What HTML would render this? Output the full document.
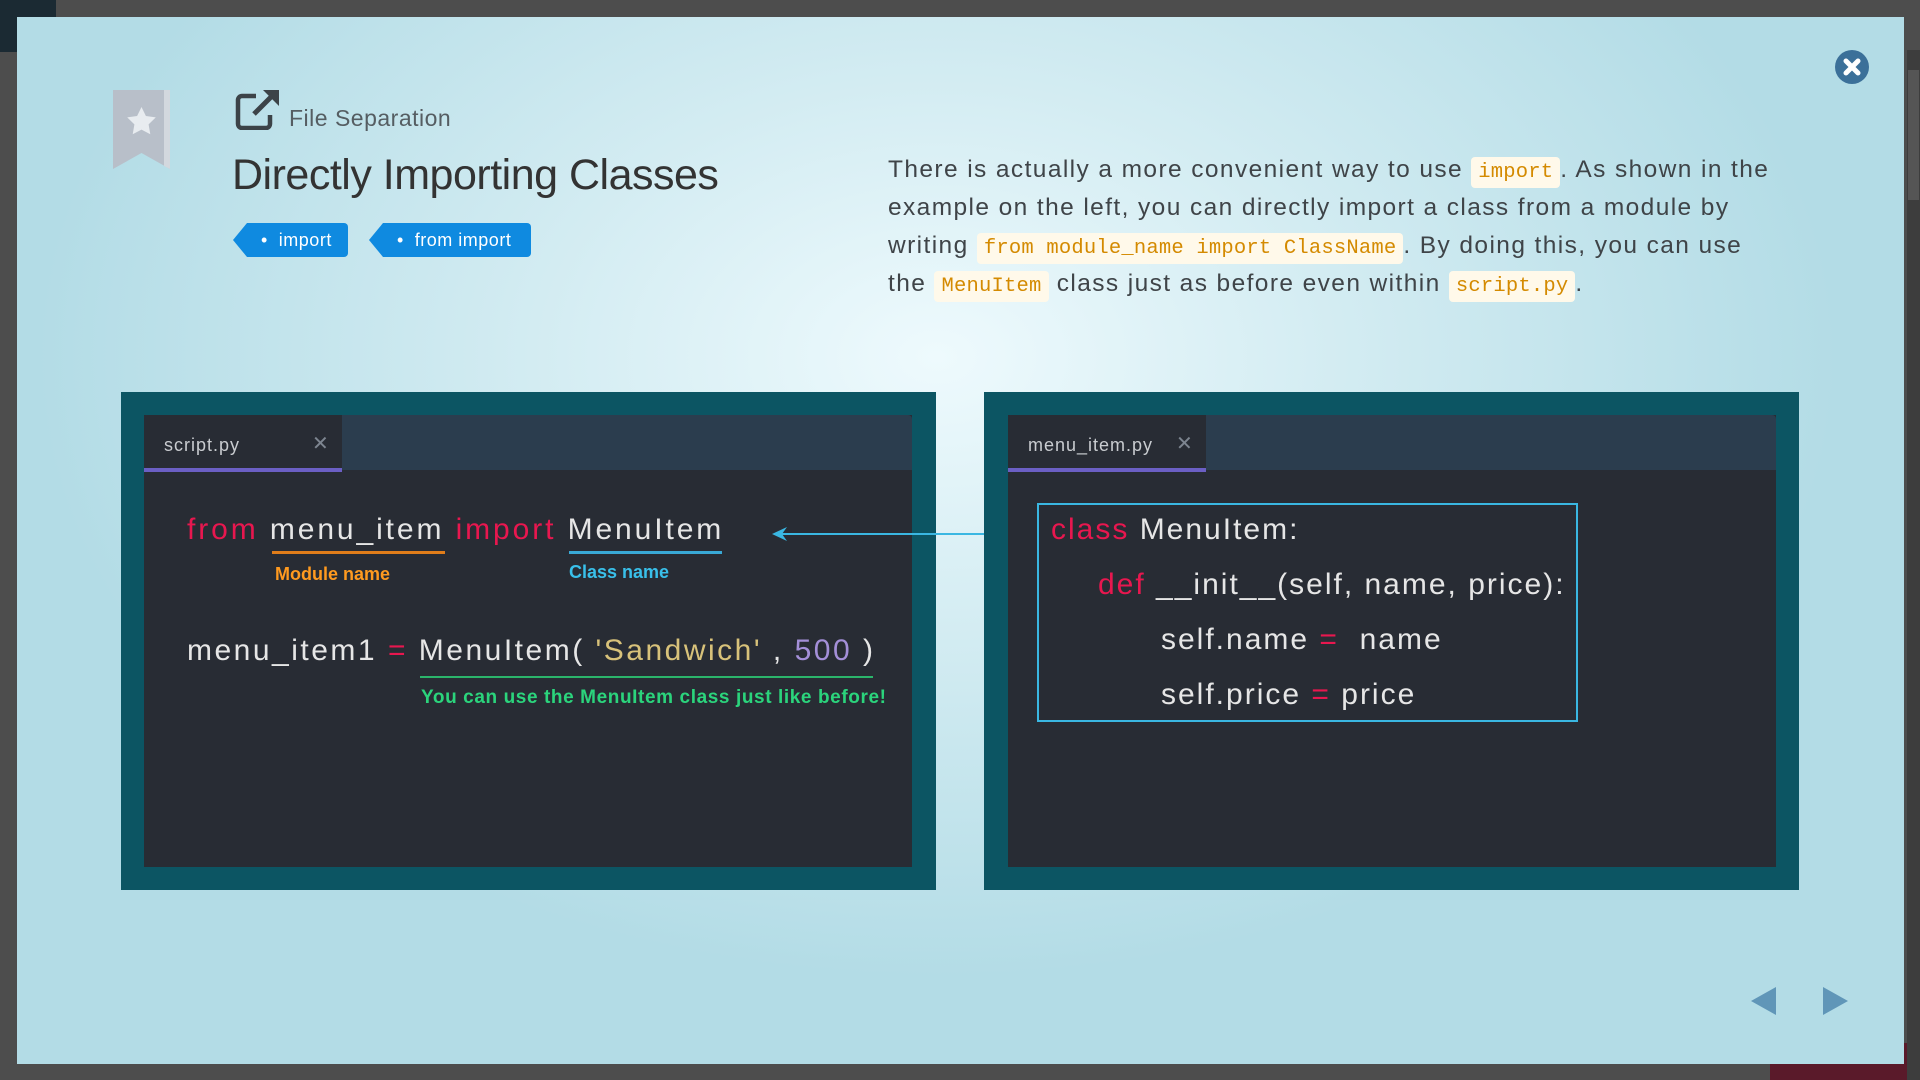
<!DOCTYPE html>
<html><head><meta charset="utf-8"><style>
*{margin:0;padding:0;box-sizing:border-box}
body{width:1920px;height:1080px;overflow:hidden;background:#4d4d4d;font-family:"Liberation Sans",sans-serif;position:relative}
.abs{position:absolute}
#modal{left:17px;top:17px;width:1887px;height:1047px;background:radial-gradient(ellipse 900px 620px at 920px 340px,#eefafd 0%,#d3ecf2 45%,#b3dce6 100%);overflow:hidden}
.code{font-family:"Liberation Sans",sans-serif;font-size:30px;color:#e6e6e6;letter-spacing:2px;white-space:pre}
.l{letter-spacing:2.9px}
.kw{color:#e8174f}
.inl{font-family:"Liberation Mono",monospace;font-size:20.5px;line-height:1;color:#d48a00;background:#fff9ea;border-radius:4px;padding:4px 7px;letter-spacing:.2px}
.tag{height:34px;background:#0f8ae0;color:#fff;font-size:18px;border-radius:0 4px 4px 0;line-height:34px;letter-spacing:.5px}
.tag:before{content:"";position:absolute;left:-14px;top:0;border-right:14px solid #0f8ae0;border-top:17px solid transparent;border-bottom:17px solid transparent}
.panel{background:#0c5563}
.ed{background:#282c34}
.tabbar{background:#2b3d4e}
.tab{background:#282c34;border-bottom:4px solid #6b5fc4;color:#c9ccd0;font-size:18px;letter-spacing:1px}
</style></head><body>
<div class="abs" style="left:0;top:0;width:56px;height:52px;background:#1b2a33"></div>
<div class="abs" style="left:1770px;top:1043px;width:137px;height:37px;background:#5a1a2a"></div>
<div class="abs" style="left:1907px;top:50px;width:13px;height:1030px;background:#3d3d3d"></div>
<div class="abs" style="left:1908px;top:70px;width:11px;height:130px;background:#555"></div>
<div id="modal" class="abs">
 <svg class="abs" style="left:95px;top:72px" width="60" height="82" viewBox="0 0 60 82">
  <path d="M1 1H58V80L29.5 64L1 80Z" fill="#b8bfc9"/>
  <path d="M52 1H58V80L52 77Z" fill="#d3d8de"/>
  <path d="M29.5 18l4.4 9 9.9 1.4-7.2 7 1.7 9.8-8.8-4.6-8.8 4.6 1.7-9.8-7.2-7 9.9-1.4z" fill="#e8ecf0"/>
 </svg>
 <svg class="abs" style="left:217px;top:71px" width="48" height="42" viewBox="0 0 48 42">
  <path d="M22 8H8a4 4 0 0 0-4 4v24a4 4 0 0 0 4 4h24a4 4 0 0 0 4-4v-9" fill="none" stroke="#3c4348" stroke-width="4.5"/>
  <path d="M20 26L39 7" stroke="#3c4348" stroke-width="5"/>
  <path d="M29 2H45V18Z" fill="#3c4348"/>
 </svg>
 <div class="abs" style="left:272px;top:88px;font-size:23px;color:#555d62;letter-spacing:.5px">File Separation</div>
 <div class="abs" style="left:215px;top:134px;font-size:43px;color:#333;letter-spacing:-.5px">Directly Importing Classes</div>
 <div class="abs tag" style="left:230px;top:206px;width:101px;padding-left:14px">•&nbsp; import</div>
 <div class="abs tag" style="left:366px;top:206px;width:148px;padding-left:14px">•&nbsp; from import</div>
 <div class="abs" style="left:871px;top:134px;width:884px;font-size:24.5px;line-height:38px;color:#3f4448;letter-spacing:1.4px">There is actually a more convenient way to use <span class="inl">import</span>. As shown in the example on the left, you can directly import a class from a module by writing <span class="inl">from module_name import ClassName</span>. By doing this, you can use the <span class="inl">MenuItem</span> class just as before even within <span class="inl">script.py</span>.</div>
 <svg class="abs" style="left:1817px;top:32px" width="36" height="36" viewBox="0 0 36 36"><circle cx="18" cy="18" r="17" fill="#3b7099"/><path d="M12 12L24 24M24 12L12 24" stroke="#fff" stroke-width="5" stroke-linecap="round"/></svg>
 <div class="abs panel" style="left:104px;top:375px;width:815px;height:498px"></div>
 <div class="abs ed" style="left:127px;top:398px;width:768px;height:452px"></div>
 <div class="abs tabbar" style="left:127px;top:398px;width:768px;height:55px;border-radius:4px 4px 0 0"></div>
 <div class="abs tab" style="left:127px;top:398px;width:198px;height:57px;padding:20px 0 0 20px;border-radius:4px 0 0 0">script.py<span style="position:absolute;left:168px;top:16px;color:#7d8590;font-size:20px">✕</span></div>
 <div class="abs code l" style="left:170px;top:496px"><span class="kw">from</span> menu_item <span class="kw">import</span> MenuItem</div>
 <div class="abs" style="left:255px;top:534px;width:173px;height:3px;background:#e07d1a"></div>
 <div class="abs" style="left:552px;top:534px;width:153px;height:3px;background:#39a9d6"></div>
 <div class="abs" style="left:258px;top:547px;font-size:18px;font-weight:bold;color:#ff9a1f">Module name</div>
 <div class="abs" style="left:552px;top:545px;font-size:18px;font-weight:bold;color:#39c0ea">Class name</div>
 <div class="abs code" style="left:170px;top:617px;letter-spacing:2.5px">menu_item1 <span class="kw">=</span> MenuItem( <span style="color:#d8c27a">'Sandwich'</span> , <span style="color:#a48fd8">500</span> )</div>
 <div class="abs" style="left:403px;top:659px;width:453px;height:2px;background:#2bb56b"></div>
 <div class="abs" style="left:404px;top:670px;font-size:19px;font-weight:bold;color:#2bd47c;letter-spacing:.6px">You can use the MenuItem class just like before!</div>
 <div class="abs" style="left:762px;top:516px;width:222px;height:2px;background:#3ab7e2"></div>
 <svg class="abs" style="left:755px;top:509px" width="16" height="16"><path d="M0 8L15 1L10 8L15 15Z" fill="#3ab7e2"/></svg>
 <div class="abs panel" style="left:967px;top:375px;width:815px;height:498px"></div>
 <div class="abs ed" style="left:991px;top:398px;width:768px;height:452px"></div>
 <div class="abs tabbar" style="left:991px;top:398px;width:768px;height:55px;border-radius:4px 4px 0 0"></div>
 <div class="abs tab" style="left:991px;top:398px;width:198px;height:57px;padding:20px 0 0 20px;border-radius:4px 0 0 0">menu_item.py<span style="position:absolute;left:168px;top:16px;color:#7d8590;font-size:20px">✕</span></div>
 <div class="abs" style="left:1020px;top:486px;width:541px;height:219px;border:2px solid #3ab7e2"></div>
 <div class="abs code" style="left:1034px;top:496px"><span class="kw">class</span> MenuItem:</div>
 <div class="abs code" style="left:1081px;top:551px"><span class="kw">def</span> __init__(self, name, price):</div>
 <div class="abs code" style="left:1144px;top:606px">self.name <span class="kw">=</span>  name</div>
 <div class="abs code" style="left:1144px;top:661px">self.price <span class="kw">=</span> price</div>
 <svg class="abs" style="left:1734px;top:970px" width="26" height="28"><path d="M0 14L25 0V28Z" fill="#6096b8"/></svg>
 <svg class="abs" style="left:1805px;top:970px" width="26" height="28"><path d="M26 14L1 0V28Z" fill="#6096b8"/></svg>
</div>
</body></html>
